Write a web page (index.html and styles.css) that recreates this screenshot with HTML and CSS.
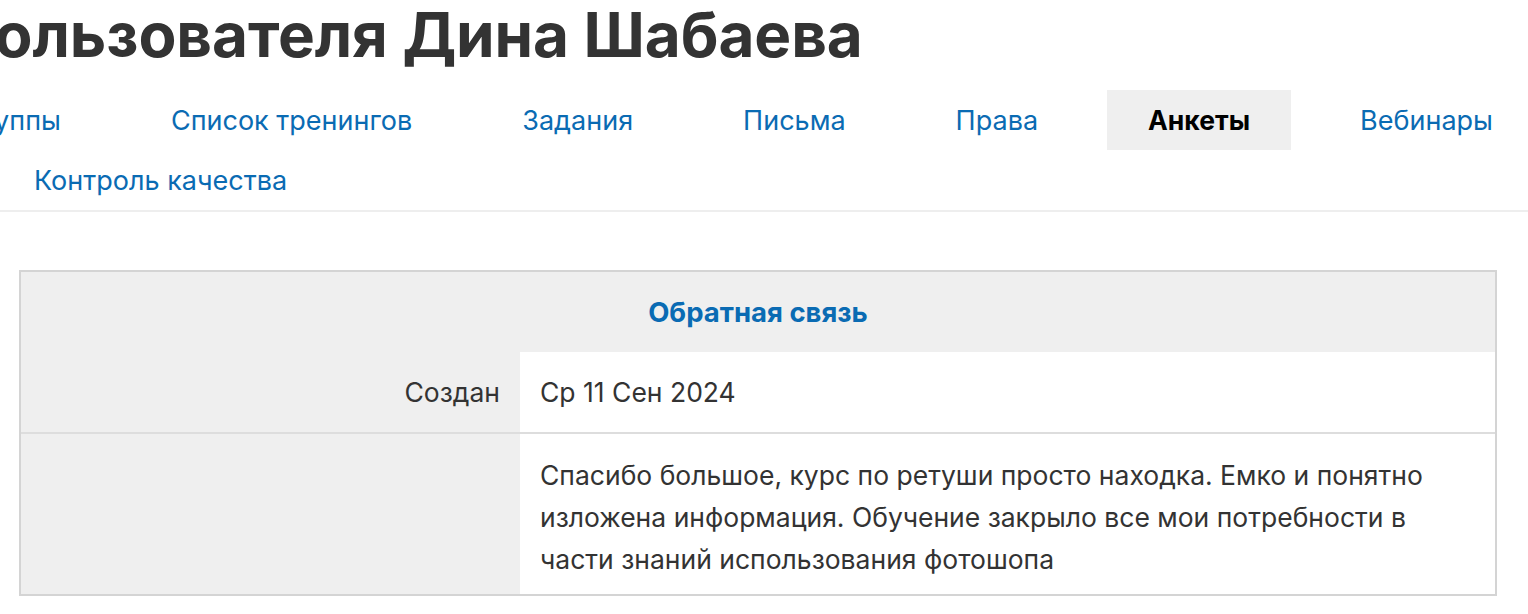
FILE: index.html
```html
<!DOCTYPE html>
<html lang="ru">
<head>
<meta charset="utf-8">
<title>Анкеты пользователя Дина Шабаева</title>
<link rel="stylesheet" href="styles.css">
</head>
<body>
<header class="head">
  <h1 class="title">Анкеты пользователя Дина Шабаева</h1>
  <nav class="tabs">
    <a class="tab tab-first" href="#">Группы</a>
    <a class="tab" href="#">Список тренингов</a>
    <a class="tab" href="#">Задания</a>
    <a class="tab" href="#">Письма</a>
    <a class="tab" href="#">Права</a>
    <a class="tab tab-active" href="#">Анкеты</a>
    <a class="tab" href="#">Вебинары</a>
    <a class="tab" href="#">Контроль качества</a>
  </nav>
</header>
<main class="content">
  <section class="form">
    <div class="form-head">Обратная связь</div>
    <div class="row">
      <div class="label">Создан</div>
      <div class="value">Ср 11 Сен 2024</div>
    </div>
    <div class="row row-last">
      <div class="label"></div>
      <div class="value value-text">Спасибо большое, курс по ретуши просто находка. Емко и понятно изложена информация. Обучение закрыло все мои потребности в части знаний использования фотошопа</div>
    </div>
  </section>
</main>
</body>
</html>
```
FILE: styles.css
```css
* { box-sizing: border-box; }
html, body { margin: 0; padding: 0; background: #fff; }
body {
  font-family: Inter, "Noto Sans", "Liberation Sans", sans-serif;
  color: #333;
  width: 1528px;
  overflow: hidden;
}
.head {
  border-bottom: 2px solid #eeeeee;
}
.title {
  margin: -5px 0 0 -296px;
  font-size: 62px;
  line-height: 80px;
  font-weight: 700;
  color: #333;
  white-space: nowrap;
  letter-spacing: -0.1px;
}
.tabs {
  display: flex;
  flex-wrap: wrap;
  column-gap: 28px;
  margin: 15px 0 0 -7px;
  width: 1580px;
}
.tab {
  display: flex;
  align-items: center;
  height: 60px;
  padding: 0 41px;
  font-size: 27px;
  color: #0a6bb3;
  text-decoration: none;
  white-space: nowrap;
}
.tab-first { margin-left: -70px; }
.tab-active {
  background: #efefef;
  color: #000;
  font-weight: 700;
  font-size: 26.5px;
}
.content {
  padding: 58px 0 0 19px;
}
.form {
  width: 1478px;
  border: 2px solid #d4d4d4;
  background: #efefef;
}
.form-head {
  height: 80px;
  display: flex;
  align-items: center;
  justify-content: center;
  font-size: 27.5px;
  font-weight: 700;
  color: #0a6bb3;
}
.row {
  display: grid;
  grid-template-columns: 499px 1fr;
  border-bottom: 2px solid #dddddd;
  font-size: 26.5px;
  line-height: 42px;
  color: #333;
}
.row-last { border-bottom: none; }
.label {
  padding: 19px 20px;
  text-align: right;
}
.value {
  background: #fff;
  padding: 19px 20px;
}
.value-text {
  padding: 20px 20px 14px;
}
```
